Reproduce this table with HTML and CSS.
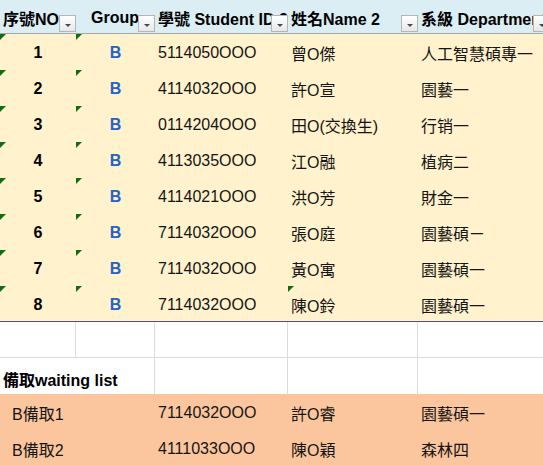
FILE: index.html
```html
<!DOCTYPE html>
<html lang="zh-Hant">
<head>
<meta charset="utf-8">
<link rel="stylesheet" href="styles.css">
</head>
<body>
<div class="sheet">
  <div class="row head">
    <div class="cell left">序號NO<span class="dd"></span></div>
    <div class="cell center">Group<span class="dd"></span></div>
    <div class="cell left">學號 Student ID 2<span class="dd"></span></div>
    <div class="cell left">姓名Name 2<span class="dd"></span></div>
    <div class="cell left">系級 Department<span class="dd"></span></div>
  </div>

  <div class="row data">
    <div class="cell num flag">1</div><div class="cell grp flag">B</div><div class="cell">5114050OOO</div><div class="cell">曾O傑</div><div class="cell">人工智慧碩專一</div>
  </div>
  <div class="row data">
    <div class="cell num flag">2</div><div class="cell grp flag">B</div><div class="cell">4114032OOO</div><div class="cell">許O宣</div><div class="cell">園藝一</div>
  </div>
  <div class="row data">
    <div class="cell num flag">3</div><div class="cell grp flag">B</div><div class="cell">0114204OOO</div><div class="cell">田O(交換生)</div><div class="cell">行销一</div>
  </div>
  <div class="row data">
    <div class="cell num flag">4</div><div class="cell grp flag">B</div><div class="cell">4113035OOO</div><div class="cell">江O融</div><div class="cell">植病二</div>
  </div>
  <div class="row data">
    <div class="cell num flag">5</div><div class="cell grp flag">B</div><div class="cell">4114021OOO</div><div class="cell">洪O芳</div><div class="cell">財金一</div>
  </div>
  <div class="row data">
    <div class="cell num flag">6</div><div class="cell grp flag">B</div><div class="cell">7114032OOO</div><div class="cell">張O庭</div><div class="cell">園藝碩ㄧ</div>
  </div>
  <div class="row data">
    <div class="cell num flag">7</div><div class="cell grp flag">B</div><div class="cell">7114032OOO</div><div class="cell">黃O寓</div><div class="cell">園藝碩一</div>
  </div>
  <div class="row data last">
    <div class="cell num flag">8</div><div class="cell grp flag">B</div><div class="cell">7114032OOO</div><div class="cell flag">陳O鈴</div><div class="cell">園藝碩一</div>
  </div>

  <div class="row blank">
    <div class="cell grid"></div><div class="cell grid"></div><div class="cell grid"></div><div class="cell grid"></div><div class="cell grid"></div>
  </div>
  <div class="row wait">
    <div class="cell label">備取waiting list</div><div class="cell vline"></div><div class="cell vline"></div><div class="cell"></div>
  </div>

  <div class="row alt">
    <div class="cell indent">B備取1</div><div class="cell"></div><div class="cell">7114032OOO</div><div class="cell">許O睿</div><div class="cell">園藝碩一</div>
  </div>
  <div class="row alt">
    <div class="cell indent">B備取2</div><div class="cell"></div><div class="cell">4111033OOO</div><div class="cell">陳O穎</div><div class="cell">森林四</div>
  </div>
</div>
</body>
</html>
```

FILE: styles.css
```css
html, body {
  margin: 0;
  padding: 0;
  background: #ffffff;
  overflow: hidden;
}

.sheet {
  width: 550px;
  font-family: "Liberation Sans", "Noto Sans CJK TC", sans-serif;
  font-size: 16px;
  color: #151515;
}

.row {
  display: grid;
  grid-template-columns: 76px 79px 133px 130px 132px;
  height: 36px;
  box-sizing: border-box;
}

.cell {
  position: relative;
  display: flex;
  align-items: center;
  padding: 2px 3px 0 3px;
  white-space: nowrap;
  overflow: hidden;
  box-sizing: border-box;
}

.head {
  height: 34px;
  background: #daeef3;
  border-bottom: 1px solid #a3a9ab;
  font-weight: bold;
  color: #000;
}

.head .cell {
  padding-top: 2px;
  padding-bottom: 0;
}

.head .center {
  justify-content: center;
  padding-left: 0;
  padding-right: 1px;
}

.dd {
  position: absolute;
  right: 0;
  top: 15px;
  width: 17px;
  height: 17px;
  box-sizing: border-box;
  border: 1px solid #b3b6b8;
  background: linear-gradient(#ffffff, #e6e8ea);
}

.dd::after {
  content: "";
  position: absolute;
  left: 5px;
  top: 8px;
  border-left: 3px solid transparent;
  border-right: 3px solid transparent;
  border-top: 3px solid #4a4a4a;
}

.data {
  background: #fff2cc;
}

.data.last {
  border-bottom: 1px solid #5e4a73;
}

.num {
  justify-content: center;
  font-weight: bold;
  color: #000;
}

.grp {
  justify-content: center;
  font-weight: bold;
  color: #2462c8;
}

.flag::before {
  content: "";
  position: absolute;
  left: 0;
  top: 0;
  width: 0;
  height: 0;
  border-top: 6px solid #0f6e12;
  border-right: 6px solid transparent;
}

.grid {
  border-right: 1px solid #dcdcdc;
  border-bottom: 1px solid #dcdcdc;
}

.wait .label {
  grid-column: span 2;
  border-right: 1px solid #dcdcdc;
  align-items: flex-end;
  padding-bottom: 3px;
  font-weight: bold;
  color: #000;
}

.vline {
  border-right: 1px solid #dcdcdc;
}

.alt {
  background: #fbc69d;
}

.indent {
  padding-left: 12px;
}
```
